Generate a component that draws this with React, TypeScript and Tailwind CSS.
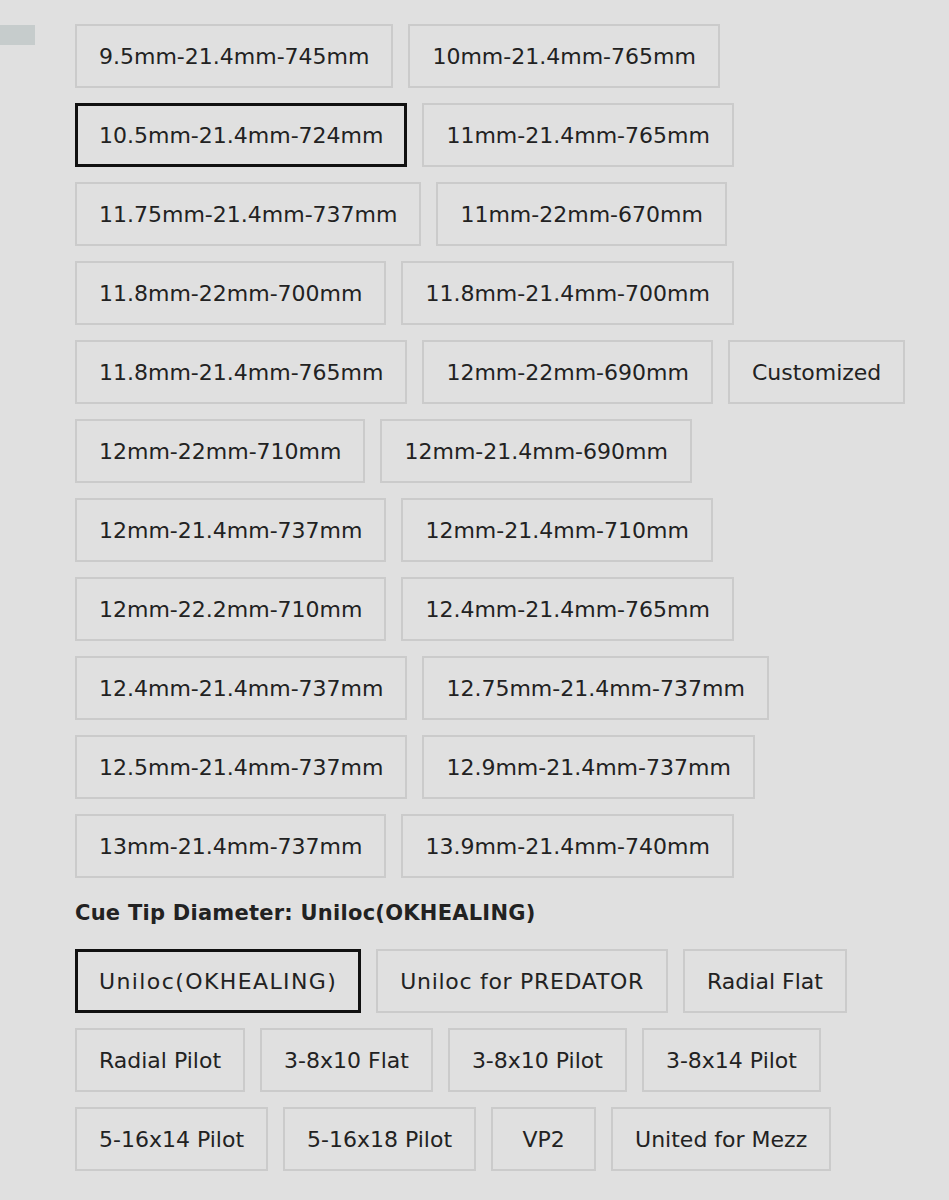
import React from "react";

interface IOption {
  label: string;
  isSelected?: boolean;
  tracking?: string;
}

const shaftRows: IOption[][] = [
  [{ label: "9.5mm-21.4mm-745mm" }, { label: "10mm-21.4mm-765mm" }],
  [{ label: "10.5mm-21.4mm-724mm", isSelected: true }, { label: "11mm-21.4mm-765mm" }],
  [{ label: "11.75mm-21.4mm-737mm" }, { label: "11mm-22mm-670mm" }],
  [{ label: "11.8mm-22mm-700mm" }, { label: "11.8mm-21.4mm-700mm" }],
  [{ label: "11.8mm-21.4mm-765mm" }, { label: "12mm-22mm-690mm" }, { label: "Customized" }],
  [{ label: "12mm-22mm-710mm" }, { label: "12mm-21.4mm-690mm" }],
  [{ label: "12mm-21.4mm-737mm" }, { label: "12mm-21.4mm-710mm" }],
  [{ label: "12mm-22.2mm-710mm" }, { label: "12.4mm-21.4mm-765mm" }],
  [{ label: "12.4mm-21.4mm-737mm" }, { label: "12.75mm-21.4mm-737mm" }],
  [{ label: "12.5mm-21.4mm-737mm" }, { label: "12.9mm-21.4mm-737mm" }],
  [{ label: "13mm-21.4mm-737mm" }, { label: "13.9mm-21.4mm-740mm" }],
];

const tipRows: IOption[][] = [
  [
    { label: "Uniloc(OKHEALING)", isSelected: true, tracking: "tracking-[1.4px]" },
    { label: "Uniloc for PREDATOR", tracking: "tracking-[0.7px]" },
    { label: "Radial Flat" },
  ],
  [{ label: "Radial Pilot" }, { label: "3-8x10 Flat" }, { label: "3-8x10 Pilot" }, { label: "3-8x14 Pilot" }],
  [{ label: "5-16x14 Pilot" }, { label: "5-16x18 Pilot" }, { label: "VP2" }, { label: "United for Mezz" }],
];

const OptionButton = ({ option }: { option: IOption }) => {
  const borderClass = option.isSelected
    ? "border-[3px] border-[#111111] px-[21px]"
    : "border-2 border-[#cbcbcb] px-[22px]";
  return (
    <button
      className={`h-16 min-w-[105px] flex items-center justify-center whitespace-nowrap text-[22px] text-[#222222] bg-[#e0e0e0] ${borderClass} ${option.tracking ?? ""}`}
    >
      {option.label}
    </button>
  );
};

const OptionGrid = ({ rows }: { rows: IOption[][] }) => (
  <div className="flex flex-col gap-[15px]">
    {rows.map((row, i) => (
      <div key={i} className="flex gap-[15px]">
        {row.map((option) => (
          <OptionButton key={option.label} option={option} />
        ))}
      </div>
    ))}
  </div>
);

const App = () => {
  return (
    <div
      className="min-h-[1200px] w-full bg-[#e0e0e0] flex"
      style={{ fontFamily: "'DejaVu Sans', 'Noto Sans', sans-serif" }}
    >
      <div className="w-[35px] h-5 mt-[25px] bg-[#c6cccc] shrink-0" />
      <div className="ml-10 pt-6 flex flex-col">
        <OptionGrid rows={shaftRows} />
        <div className="mt-[23px] mb-[24px] text-[21px] font-bold tracking-[0.25px] text-[#222222] leading-6">
          Cue Tip Diameter: Uniloc(OKHEALING)
        </div>
        <OptionGrid rows={tipRows} />
      </div>
    </div>
  );
};

export default App;
